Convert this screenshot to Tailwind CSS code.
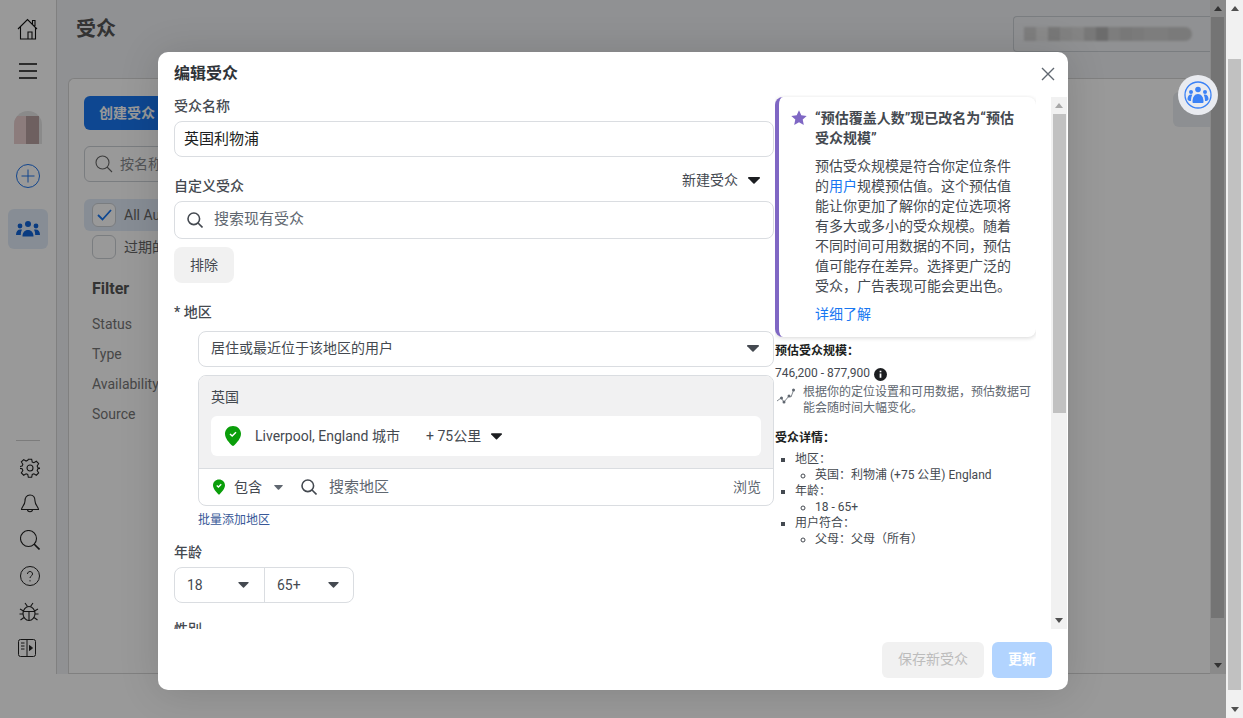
<!DOCTYPE html>
<html lang="zh">
<head>
<meta charset="utf-8">
<title>受众</title>
<script src="https://cdn.jsdelivr.net/npm/@tailwindcss/browser@4"></script>
</head>
<body class="overflow-hidden">
<div class="relative h-[718px] w-[1243px] overflow-hidden bg-white font-['Roboto','Noto_Sans_CJK_SC',sans-serif] text-[14px] text-[#444950]">

  <!-- page behind the dialog -->
  <div class="flex h-full w-full">
    <aside class="flex h-[674px] w-[57px] shrink-0 flex-col items-center border-r border-[#d6d6d6] bg-white pt-[18px]">
      <svg class="h-[22px] w-[22px]" viewBox="0 0 22 22" fill="none" stroke="#111" stroke-width="1.1"><path d="M1 11 10.500 1.500 20 11M3.500 9v12h15V9M11 21v-7h4v7M15.500 6V2.500H18V8"/></svg>
      <svg class="mt-[22px] h-[18px] w-[20px]" viewBox="0 0 20 18" fill="none" stroke="#111" stroke-width="1.6"><path d="M1 2h18M1 9h18M1 16h18"/></svg>
      <div class="relative mt-[31px] flex h-[33px] w-[28px] overflow-hidden rounded-t-[14px] bg-[#e6e6e6]">
        <div class="mt-[5px] h-full w-[12px] bg-[#e9cfcf]"></div>
        <div class="mt-[5px] h-full w-[13px] bg-[#b8a0a0]"></div>
      </div>
      <svg class="mt-[20px] h-[24px] w-[24px]" viewBox="0 0 24 24" fill="none" stroke="#1f74ea" stroke-width="1"><circle cx="12" cy="12" r="11.500"/><path d="M12 5.500v13M5.500 12h13"/></svg>
      <div class="mt-[21px] flex h-[40px] w-[40px] items-center justify-center rounded-[6px] bg-[#e2ecf8]">
        <svg class="h-[16px] w-[24px]" viewBox="0 0 24 16" fill="#0f63d8"><circle cx="12" cy="3" r="3"/><circle cx="4" cy="5" r="2.400"/><circle cx="20" cy="5" r="2.400"/><path d="M6.500 15.500c0-4 2.200-6.500 5.500-6.500s5.500 2.500 5.500 6.500zM0 14c0-3.500 1.500-5.500 4.500-5.500.7 0 1.200.1 1.500.3-1 1.500-1.200 3.500-1.200 5.200zM24 14c0-3.500-1.500-5.500-4.500-5.500-.7 0-1.200.1-1.500.3 1 1.500 1.200 3.500 1.200 5.200z"/></svg>
      </div>
      <div class="mt-[191px] h-px w-[24px] bg-[#cfcfcf]"></div>
      <svg class="mt-[17px] ml-[3px] h-[20px] w-[20px]" viewBox="0 0 24 24" fill="none" stroke="#222" stroke-width="1.3"><circle cx="12" cy="12" r="3.600"/><path d="M10 1.500h4l.7 3.300 2 .9 2.900-1.800 2.800 2.800-1.800 2.900.9 2 3.300.7-3.300.7-.9 2 1.800 2.900-2.800 2.800-2.900-1.800-2 .9-.7 3.300h-4l-.7-3.300-2-.9-2.900 1.800-2.800-2.800 1.800-2.900-.9-2-3.300-.7v-2l3.300-.7.9-2-1.800-2.900 2.800-2.800 2.900 1.800 2-.9z"/></svg>
      <svg class="mt-[16px] ml-[3px] h-[20px] w-[20px]" viewBox="0 0 20 20" fill="none" stroke="#222" stroke-width="1.1"><path d="M10 1c-3.500 0-5 2.600-5 6 0 4-3.500 6-3.500 8.500h17C18.500 13 15 11 15 7c0-3.400-1.500-6-5-6zM7.500 15.500c0 3 5 3 5 0"/></svg>
      <svg class="mt-[16px] ml-[3px] h-[20px] w-[20px]" viewBox="0 0 20 20" fill="none" stroke="#222"><circle cx="8.500" cy="8.500" r="8" stroke-width="1.100"/><path d="m14 14 5.500 5.500" stroke-width="1.600"/></svg>
      <svg class="mt-[16px] ml-[3px] h-[20px] w-[20px]" viewBox="0 0 20 20" fill="none" stroke="#222" stroke-width="1"><circle cx="10" cy="10" r="9.500"/><path d="M7.500 8c0-3.300 5-3.300 5 0 0 2-2.500 2-2.500 4"/><path d="M10 14.200v1.200"/></svg>
      <svg class="mt-[16px] ml-[1px] h-[20px] w-[20px]" viewBox="0 0 20 20" fill="none" stroke="#222" stroke-width="1.100"><ellipse cx="10" cy="11.500" rx="6" ry="7"/><path d="M4.200 9.500h11.600M10 9.500v9M6 1l2.500 3.500M14 1l-2.500 3.500M1 7l3.500 2M19 7l-3.500 2M.5 12H4M19.500 12H16M1.500 18 5 15.500M18.500 18 15 15.500"/></svg>
      <svg class="mt-[17px] -ml-[2px] h-[18px] w-[18px]" viewBox="0 0 18 18" fill="none" stroke="#222" stroke-width="1"><rect x=".5" y=".5" width="17" height="17" rx="2"/><path d="M9 .5v17M3 4h3.500M3 7h3.500M3 10h3.500"/><path d="m11.500 6.500 3 2.500-3 2.500z" fill="#222"/></svg>
    </aside>

    <main class="relative h-[674px] min-w-0 flex-1 bg-[#f0f2f5] pl-[11px]">
      <div class="flex h-[78px] items-start justify-between">
        <h1 class="mt-[15px] ml-[8px] text-[20px] font-bold leading-[28px] text-[#555]">受众</h1>
        <div class="mt-[16px] flex h-[36px] w-[197px] items-center rounded-l-[4px] border-y border-l border-[#ccd0d5] pl-[10px]">
          <div class="flex h-[14px] blur-[1px]">
            <div class="w-[12px] bg-[#d2d2d2]"></div><div class="w-[12px] bg-[#e6e6e6]"></div><div class="w-[12px] bg-[#c8c8c8]"></div><div class="w-[12px] bg-[#d8d8d8]"></div><div class="w-[12px] bg-[#dcdcdc]"></div><div class="w-[12px] bg-[#c8c8c8]"></div><div class="w-[12px] bg-[#b4b4b4]"></div><div class="w-[12px] bg-[#d0d0d0]"></div><div class="w-[12px] bg-[#c8c8c8]"></div><div class="w-[12px] bg-[#cccccc]"></div><div class="w-[24px] bg-[#d0d0d0]"></div><div class="w-[24px] rounded-r-[7px] bg-[#cccccc]"></div>
          </div>
        </div>
      </div>
      <section class="h-[596px] rounded-t-[6px] border-y border-l border-[#d6d6d6] bg-white pl-[15px] pt-[17px]">
        <div class="flex justify-between">
          <div class="flex h-[34px] w-[110px] items-center rounded-[6px] bg-[#1877f2] pl-[15px] text-[14px] font-bold text-white">创建受众</div>
          <div class="mt-[-4px] h-[35px] w-[37px] rounded-l-[6px] bg-[#eceff3]"></div>
        </div>
        <div class="mt-[16px] flex h-[36px] w-[220px] items-center rounded-[6px] border border-[#ccd0d5] pl-[10px] text-[#8a8d91]">
          <svg class="mr-[7px] h-[18px] w-[18px]" viewBox="0 0 18 18" fill="none" stroke="#666" stroke-width="1.100"><circle cx="7.500" cy="7.500" r="6.500"/><path d="m12 12 5 5"/></svg>按名称
        </div>
        <div class="mt-[17px] flex h-[32px] w-[220px] items-center gap-[8px] rounded-[6px] bg-[#e2ecf8] pl-[8px] text-[#666]">
          <span class="flex h-[24px] w-[24px] items-center justify-center rounded-[6px] border border-[#ccd0d5] bg-white"><svg class="h-[12px] w-[15px]" viewBox="0 0 15 12" fill="none" stroke="#1877f2" stroke-width="1.800"><path d="m1 6 4.500 4.500L14 1"/></svg></span>All Audiences
        </div>
        <div class="mt-[4px] flex h-[24px] items-center gap-[8px] pl-[8px] text-[#666]">
          <span class="h-[24px] w-[24px] rounded-[6px] border border-[#ccd0d5] bg-white"></span>过期的
        </div>
        <div class="mt-[20px] pl-[8px] text-[16px] font-bold leading-[20px] text-[#555]">Filter</div>
        <ul class="mt-[10px] pl-[8px] text-[14px] text-[#777]">
          <li class="h-[30px] leading-[30px]">Status</li>
          <li class="h-[30px] leading-[30px]">Type</li>
          <li class="h-[30px] leading-[30px]">Availability</li>
          <li class="h-[30px] leading-[30px]">Source</li>
        </ul>
      </section>
    </main>

    <div class="flex h-[674px] w-[16px] shrink-0 flex-col bg-[#e6e6e6]">
      <div class="flex h-[17px] items-center justify-center"><span class="h-0 w-0 border-x-[4px] border-b-[5px] border-x-transparent border-b-[#555]"></span></div>
      <div class="mx-[1px] h-[601px] w-[13px] bg-[#c1c1c1]"></div>
      <div class="mt-auto flex h-[17px] items-center justify-center"><span class="h-0 w-0 border-x-[4px] border-t-[5px] border-x-transparent border-t-[#555]"></span></div>
    </div>
    <div class="w-[17px] shrink-0"></div>
  </div>

  <!-- overlay -->
  <div class="absolute inset-0 bg-black/40"></div>

  <!-- window scrollbar -->
  <div class="absolute top-0 right-0 flex h-full w-[17px] flex-col bg-[#f1f1f1]">
    <div class="flex h-[17px] items-center justify-center"><span class="h-0 w-0 border-x-[4px] border-b-[5px] border-x-transparent border-b-[#505050]"></span></div>
    <div class="mx-[2px] mt-[42px] h-[631px] w-[13px] bg-[#c1c1c1]"></div>
    <div class="mt-auto flex h-[17px] items-center justify-center"><span class="h-0 w-0 border-x-[4px] border-t-[5px] border-x-transparent border-t-[#505050]"></span></div>
  </div>

  <!-- floating button -->
  <div class="absolute top-[75px] left-[1178px] flex h-[40px] w-[40px] items-center justify-center rounded-full bg-[#e9ebf0]">
    <svg class="h-[28px] w-[28px]" viewBox="0 0 28 28" fill="none"><circle cx="14" cy="14" r="13" stroke="#3b82f6" stroke-width="1.300"/><g fill="#3b82f6"><circle cx="14" cy="8.500" r="2.800"/><circle cx="7" cy="11" r="2"/><circle cx="21" cy="11" r="2"/><path d="M8.500 21c0-5 2-8 5.500-8s5.500 3 5.500 8c0 .6-.5 1-1 1h-9c-.5 0-1-.4-1-1z"/><path d="M3.500 18c0-2.500 1.500-4.500 3.500-4.500.5 0 1 .1 1.300.3C7.500 15.500 7 17.500 7 20c-2 0-3.500-.5-3.500-2zM24.500 18c0-2.500-1.500-4.500-3.500-4.500-.5 0-1 .1-1.300.3.800 1.700 1.300 3.700 1.300 6.200 2 0 3.500-.5 3.500-2z"/></g></svg>
  </div>

  <!-- dialog -->
  <div class="absolute top-[52px] left-[158px] flex h-[638px] w-[910px] flex-col rounded-[10px] bg-white shadow-[0_2px_40px_rgba(0,0,0,0.14)]">
    <header class="flex h-[43px] shrink-0 items-center justify-between pr-[12px] pl-[16px]">
      <h2 class="text-[16px] font-bold leading-[43px] text-[#2f3338]">编辑受众</h2>
      <svg class="h-[16px] w-[16px]" viewBox="0 0 16 16" fill="none" stroke="#606770" stroke-width="1.400"><path d="m2 2 12 12M14 2 2 14"/></svg>
    </header>

    <div class="flex h-[534px] shrink-0 overflow-hidden">
      <!-- form column -->
      <div class="w-[617px] shrink-0 overflow-hidden pl-[16px] pr-[1px]">
        <div class="h-[22px] text-[14px] font-medium leading-[22px]">受众名称</div>
        <div class="mt-[4px] flex h-[36px] items-center rounded-[8px] border border-[#dadde1] pt-[1px] pl-[9px] text-[15px] text-[#1c1e21]">英国利物浦</div>

        <div class="mt-[18px] flex h-[26px] items-start justify-between">
          <span class="leading-[22px] font-medium">自定义受众</span>
          <span class="mt-[-6px] flex items-center leading-[22px]">新建受众<svg class="ml-[10px] mr-[14px] h-[7px] w-[12px]" viewBox="0 0 12 7" fill="#1c1e21"><path d="M.8 0h10.400c.7 0 1 .7.6 1.200L6.600 6.500c-.3.3-.9.3-1.200 0L.2 1.200C-.2.700.1 0 .8 0z"/></svg></span>
        </div>
        <div class="flex h-[38px] items-center rounded-[8px] border border-[#dadde1] pb-[1px] pl-[12px] text-[15px] text-[#606770]">
          <svg class="mr-[11px] h-[16px] w-[16px]" viewBox="0 0 16 16" fill="none" stroke="#444950" stroke-width="1.600"><circle cx="6.800" cy="6.800" r="5.800"/><path d="m11 11 4.500 4.500"/></svg>搜索现有受众
        </div>
        <div class="mt-[8px] flex h-[36px] w-[60px] items-center justify-center rounded-[8px] bg-[#f1f1f1]">排除</div>

        <div class="mt-[18px] h-[22px] font-medium leading-[22px]">* 地区</div>
        <div class="ml-[24px] mt-[8px]">
          <div class="flex h-[36px] items-center justify-between rounded-[8px] border border-[#dadde1] pr-[14px] pb-[2px] pl-[12px]">
            <span>居住或最近位于该地区的用户</span>
            <svg class="h-[7px] w-[12px]" viewBox="0 0 12 7" fill="#444950"><path d="M.8 0h10.400c.7 0 1 .7.6 1.200L6.600 6.500c-.3.3-.9.3-1.200 0L.2 1.200C-.2.700.1 0 .8 0z"/></svg>
          </div>
          <div class="mt-[8px] overflow-hidden rounded-[8px] border border-[#dadde1]">
            <div class="h-[93px] border-b border-[#dadde1] bg-[#f1f1f2] px-[12px] pt-[11px]">
              <div class="h-[20px] leading-[20px]">英国</div>
              <div class="mt-[9px] flex h-[40px] items-center rounded-[6px] bg-white pl-[14px]">
                <svg class="mr-[14px] h-[20px] w-[16px]" viewBox="0 0 16 20"><path d="M8 0c4.500 0 8 3.400 8 7.800 0 4.600-4.300 9.200-7 11.700-.6.600-1.400.6-2 0C4.300 17 0 12.400 0 7.800 0 3.400 3.500 0 8 0z" fill="#0a9e0a"/><path d="m5 8 2.200 2L11 6.300" fill="none" stroke="#fff" stroke-width="1.500"/></svg>
                <span class="w-[171px]">Liverpool, England 城市</span>
                <span>+ 75公里</span>
                <svg class="ml-[10px] h-[7px] w-[11px]" viewBox="0 0 12 7" fill="#1c1e21"><path d="M.8 0h10.400c.7 0 1 .7.6 1.200L6.600 6.500c-.3.3-.9.3-1.200 0L.2 1.200C-.2.700.1 0 .8 0z"/></svg>
              </div>
            </div>
            <div class="flex h-[36px] items-center pr-[12px] pl-[14px]">
              <svg class="h-[16px] w-[12px]" viewBox="0 0 16 20"><path d="M8 0c4.500 0 8 3.400 8 7.800 0 4.600-4.300 9.200-7 11.700-.6.600-1.400.6-2 0C4.300 17 0 12.400 0 7.800 0 3.400 3.500 0 8 0z" fill="#0a9e0a"/><path d="m5 8 2.200 2L11 6.300" fill="none" stroke="#fff" stroke-width="1.800"/></svg>
              <span class="ml-[9px]">包含</span>
              <svg class="ml-[12px] h-[5px] w-[9px]" viewBox="0 0 12 7" fill="#606770"><path d="M.8 0h10.400c.7 0 1 .7.6 1.200L6.600 6.500c-.3.3-.9.3-1.200 0L.2 1.200C-.2.700.1 0 .8 0z"/></svg>
              <svg class="ml-[18px] h-[16px] w-[16px]" viewBox="0 0 16 16" fill="none" stroke="#444950" stroke-width="1.600"><circle cx="6.800" cy="6.800" r="5.800"/><path d="m11 11 4.500 4.500"/></svg>
              <span class="ml-[12px] text-[15px] text-[#606770]">搜索地区</span>
              <span class="ml-auto text-[#606770]">浏览</span>
            </div>
          </div>
          <div class="mt-[6px] text-[12px] leading-[16px] text-[#385898]">批量添加地区</div>
        </div>

        <div class="mt-[13px] h-[22px] font-medium leading-[22px]">年龄</div>
        <div class="mt-[4px] flex h-[36px] w-[180px] rounded-[8px] border border-[#dadde1]">
          <div class="flex w-[90px] items-center justify-between border-r border-[#dadde1] pr-[15px] pl-[12px]">18<svg class="h-[6px] w-[11px]" viewBox="0 0 12 7" fill="#444950"><path d="M.8 0h10.400c.7 0 1 .7.6 1.200L6.600 6.500c-.3.3-.9.3-1.200 0L.2 1.200C-.2.700.1 0 .8 0z"/></svg></div>
          <div class="flex flex-1 items-center justify-between pr-[14px] pl-[12px]">65+<svg class="h-[6px] w-[11px]" viewBox="0 0 12 7" fill="#444950"><path d="M.8 0h10.400c.7 0 1 .7.6 1.200L6.600 6.500c-.3.3-.9.3-1.200 0L.2 1.200C-.2.700.1 0 .8 0z"/></svg></div>
        </div>
        <div class="mt-[15px] h-[22px] font-medium leading-[22px]">性别</div>
      </div>

      <!-- summary column -->
      <div class="w-[261px] shrink-0 overflow-hidden pt-[2px]">
        <div class="flex h-[240px] rounded-[8px] border-l-[4px] border-[#7f67c4] bg-white pt-[11px] pr-[16px] pl-[12px] shadow-[0_1px_4px_rgba(0,0,0,0.16)]">
          <svg class="mt-[2px] mr-[8px] h-[16px] w-[16px] shrink-0" viewBox="0 0 16 16" fill="#7f67c4"><path d="M8 .3l2.300 4.900 5.400.7-4 3.700 1.100 5.300L8 12.300l-4.800 2.600 1.100-5.300-4-3.700 5.400-.7z"/></svg>
          <div class="min-w-0">
            <p class="text-[14px] font-bold leading-[20px]">“预估覆盖人数”现已改名为“预估受众规模”</p>
            <p class="mt-[8px] leading-[20px]">预估受众规模是符合你定位条件的<span class="text-[#1877f2]">用户</span>规模预估值。这个预估值能让你更加了解你的定位选项将有多大或多小的受众规模。随着不同时间可用数据的不同，预估值可能存在差异。选择更广泛的受众，广告表现可能会更出色。</p>
            <p class="mt-[8px] leading-[20px] text-[#1877f2]">详细了解</p>
          </div>
        </div>
        <div class="mt-[6px] text-[12px] font-bold leading-[16px] text-[#1c1e21]">预估受众规模：</div>
        <div class="mt-[6px] flex items-center text-[12px] leading-[16px]">746,200 - 877,900
          <svg class="ml-[4px] mt-[2px] h-[13px] w-[13px]" viewBox="0 0 12 12"><circle cx="6" cy="6" r="6" fill="#1c1e21"/><path d="M6 5v4M6 2.500v1.500" stroke="#fff" stroke-width="1.600"/></svg>
        </div>
        <div class="mt-[3px] flex text-[12px] leading-[16px] text-[#606770]">
          <svg class="mt-[3px] mr-[8px] ml-[1px] h-[18px] w-[19px] shrink-0" viewBox="0 0 19 18" fill="none" stroke="#606770" stroke-width=".8"><path d="M1 14l4-3 3 4 5-6 2 1 3-8"/><g fill="#606770" stroke="none"><circle cx="5.500" cy="11" r="1.500"/><circle cx="8" cy="15" r="1.500"/><circle cx="13" cy="9" r="1.500"/><circle cx="17.500" cy="3" r="1.500"/></g></svg>
          <span>根据你的定位设置和可用数据，预估数据可能会随时间大幅变化。</span>
        </div>
        <div class="mt-[14px] text-[12px] font-bold leading-[16px] text-[#1c1e21]">受众详情：</div>
        <ul class="mt-[5px] list-[square] pl-[20px] text-[12px] leading-[16px]">
          <li>地区：<ul class="list-[circle] pl-[20px]"><li>英国：利物浦 (+75 公里) England</li></ul></li>
          <li>年龄：<ul class="list-[circle] pl-[20px]"><li>18 - 65+</li></ul></li>
          <li>用户符合：<ul class="list-[circle] pl-[20px]"><li>父母：父母（所有）</li></ul></li>
        </ul>
      </div>

      <!-- dialog scrollbar -->
      <div class="mt-[2px] ml-[15px] flex h-[532px] w-[16px] shrink-0 flex-col bg-[#f1f1f1]">
        <div class="flex h-[17px] items-center justify-center"><span class="h-0 w-0 border-x-[4px] border-b-[5px] border-x-transparent border-b-[#a8a8a8]"></span></div>
        <div class="mx-[2px] h-[299px] w-[13px] bg-[#c1c1c1]"></div>
        <div class="mt-auto flex h-[17px] items-center justify-center"><span class="h-0 w-0 border-x-[4px] border-t-[5px] border-x-transparent border-t-[#505050]"></span></div>
      </div>
    </div>

    <footer class="flex flex-1 items-start justify-end gap-[8px] pt-[13px] pr-[16px]">
      <div class="flex h-[36px] w-[102px] items-center justify-center rounded-[6px] bg-[#f1f1f1] pb-[1px] text-[#bcbcbc]">保存新受众</div>
      <div class="flex h-[36px] w-[60px] items-center justify-center rounded-[6px] bg-[#b2d4ff] pb-[1px] font-bold text-white">更新</div>
    </footer>
  </div>
</div>
</body>
</html>
